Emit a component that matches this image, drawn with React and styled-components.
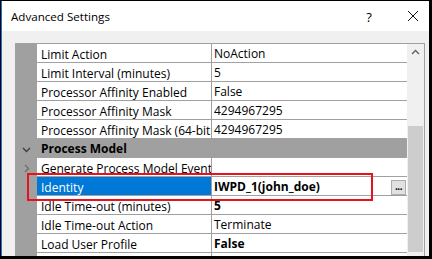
import React from 'react'
import styled, { createGlobalStyle } from 'styled-components'

const GlobalStyle = createGlobalStyle`
  html, body {
    margin: 0;
    padding: 0;
    background: #ffffff;
  }
  * {
    box-sizing: border-box;
  }
`;

const rows = [
  { name: 'Limit Action', value: 'NoAction' },
  { name: 'Limit Interval (minutes)', value: '5' },
  { name: 'Processor Affinity Enabled', value: 'False' },
  { name: 'Processor Affinity Mask', value: '4294967295' },
  { name: 'Processor Affinity Mask (64-bit option)', value: '4294967295' },
  { category: 'Process Model' },
  { name: 'Generate Process Model Event Log Entry', value: '', collapsed: true },
  { name: 'Identity', value: 'IWPD_1(john_doe)', bold: true, selected: true, button: true },
  { name: 'Idle Time-out (minutes)', value: '5', bold: true },
  { name: 'Idle Time-out Action', value: 'Terminate' },
  { name: 'Load User Profile', value: 'False', bold: true },
  { name: 'Maximum Worker Processes', value: '1' },
]

const Chevron = ({ dir }) => (
  <svg width="9" height="9" viewBox="0 0 9 9">
    {dir === 'down' && <path d="M1 3 L4.5 6.5 L8 3" fill="none" stroke="#3c3c3c" strokeWidth="1.3" />}
    {dir === 'right' && <path d="M3 1 L6.5 4.5 L3 8" fill="none" stroke="#6d6d6d" strokeWidth="1.3" />}
    {dir === 'up' && <path d="M1 6 L4.5 2.5 L8 6" fill="none" stroke="#606060" strokeWidth="1.4" />}
  </svg>
)

export default function App() {
  return (
    <>
      <GlobalStyle />
      <Window>
        <Inner>
          <TitleBar>
            <Title>Advanced Settings</Title>
            <TitleButtons>
              <Help>?</Help>
              <Close>
                <svg width="12" height="12" viewBox="0 0 12 12">
                  <path d="M1 1 L11 11 M11 1 L1 11" stroke="#111" strokeWidth="1" />
                </svg>
              </Close>
            </TitleButtons>
          </TitleBar>
          <Body>
            <Grid>
              <Rows>
                {rows.map((row, i) =>
                  row.category ? (
                    <CategoryRow key={i}>
                      <Margin>
                        <Chevron dir="down" />
                      </Margin>
                      <CategoryLabel>{row.category}</CategoryLabel>
                    </CategoryRow>
                  ) : (
                    <Row key={i}>
                      <Margin>{row.collapsed && <Chevron dir="right" />}</Margin>
                      <NameCell $selected={row.selected}>{row.name}</NameCell>
                      <ValueCell $bold={row.bold}>
                        <span>{row.value}</span>
                        {row.button && <DotsButton>...</DotsButton>}
                      </ValueCell>
                    </Row>
                  )
                )}
              </Rows>
              <Scrollbar>
                <ArrowUp>
                  <Chevron dir="up" />
                </ArrowUp>
                <Thumb />
              </Scrollbar>
            </Grid>
            <Highlight />
          </Body>
        </Inner>
      </Window>
    </>
  )
}

const Window = styled.div`
  width: 432px;
  height: 259px;
  border-top: 1px solid #000;
  border-left: 1px solid #000;
  border-right: 3px solid #000;
  border-bottom: 3px solid #000;
  overflow: hidden;
  font-family: 'Segoe UI', 'Open Sans', 'Noto Sans', sans-serif;
  font-size: 12px;
  color: #000;
`;

const Inner = styled.div`
  height: 100%;
  display: flex;
  flex-direction: column;
  border-left: 1px solid #1a78d2;
`;

const TitleBar = styled.div`
  height: 30px;
  flex: none;
  display: flex;
  align-items: center;
  justify-content: space-between;
  padding-left: 9px;
  background: #ffffff;
`;

const Title = styled.span`
  font-size: 11.6px;
  margin-top: 1px;
`;

const TitleButtons = styled.div`
  display: flex;
  align-items: center;
`;

const Help = styled.span`
  width: 60px;
  text-align: center;
  font-size: 13px;
  margin-top: 1px;
`;

const Close = styled.span`
  width: 28px;
  display: flex;
  justify-content: center;
  margin-right: 2px;
`;

const Body = styled.div`
  position: relative;
  flex: 1;
  min-height: 0;
  background: #f0f0f0;
  padding: 12px 4px 0 13px;
  overflow: hidden;
`;

const Grid = styled.div`
  display: flex;
  height: 100%;
  border: 1px solid #a0a0a0;
  border-bottom: none;
  background: #f0f0f0;
`;

const Rows = styled.div`
  width: 391px;
  display: flex;
  flex-direction: column;
`;

const Row = styled.div`
  display: flex;
  height: 19px;
  flex: none;
`;

const Margin = styled.div`
  width: 21px;
  flex: none;
  background: #a0a0a0;
  display: flex;
  align-items: center;
  justify-content: center;
  padding-top: 1px;
`;

const NameCell = styled.div`
  width: 175px;
  height: 19px;
  flex: none;
  padding: 0 0 0 4px;
  line-height: 21px;
  white-space: nowrap;
  overflow: hidden;
  border-bottom: 1px solid #a0a0a0;
  border-right: 1px solid #a0a0a0;
  background: ${p => (p.$selected ? '#0078d7' : '#ffffff')};
  color: ${p => (p.$selected ? '#ffffff' : '#000000')};
`;

const ValueCell = styled.div`
  flex: 1;
  height: 19px;
  display: flex;
  align-items: center;
  justify-content: space-between;
  padding: 0 1px 0 2px;
  line-height: 21px;
  white-space: nowrap;
  overflow: hidden;
  background: #ffffff;
  border-bottom: 1px solid #a0a0a0;
  font-weight: ${p => (p.$bold ? 700 : 400)};
`;

const DotsButton = styled.div`
  width: 15px;
  height: 15px;
  margin-top: 2px;
  border: 1px solid #adadad;
  background: #e1e1e1;
  font-size: 10px;
  font-weight: 700;
  line-height: 11px;
  text-align: center;
  letter-spacing: -0.5px;
`;

const CategoryRow = styled.div`
  display: flex;
  height: 19px;
  flex: none;
  background: #a0a0a0;
`;

const CategoryLabel = styled.div`
  padding-left: 4px;
  line-height: 20px;
  font-weight: 700;
`;

const Scrollbar = styled.div`
  width: 17px;
  flex: none;
  display: flex;
  flex-direction: column;
  align-items: center;
  background: #f0f0f0;
`;

const ArrowUp = styled.div`
  height: 17px;
  display: flex;
  align-items: center;
  justify-content: center;
`;

const Thumb = styled.div`
  width: 15px;
  height: 126px;
  margin-top: 65px;
  background: #cdcdcd;
`;

const Highlight = styled.div`
  position: absolute;
  left: 25px;
  top: 142px;
  width: 346px;
  height: 28px;
  border: 2px solid #e8121a;
  pointer-events: none;
`;
